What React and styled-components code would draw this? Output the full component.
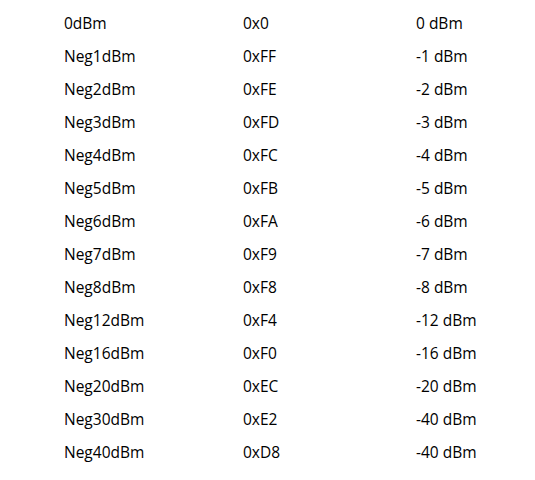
import React from "react";
import styled, { createGlobalStyle } from "styled-components";

const Global = createGlobalStyle`
  html, body { margin: 0; padding: 0; background: #fff; }
  body { font-family: "Open Sans", "Noto Sans", sans-serif; }
`;

const Table = styled.div`
  display: grid;
  grid-template-columns: 179px 173px 1fr;
  grid-auto-rows: 33px;
  padding: 6px 0 0 64px;
  width: 535px;
  box-sizing: border-box;
`;

const Cell = styled.div`
  display: flex;
  align-items: center;
  font-size: 15.5px;
  color: #000;
  white-space: nowrap;
`;

const rows = [
  ["0dBm", "0x0", "0 dBm"],
  ["Neg1dBm", "0xFF", "-1 dBm"],
  ["Neg2dBm", "0xFE", "-2 dBm"],
  ["Neg3dBm", "0xFD", "-3 dBm"],
  ["Neg4dBm", "0xFC", "-4 dBm"],
  ["Neg5dBm", "0xFB", "-5 dBm"],
  ["Neg6dBm", "0xFA", "-6 dBm"],
  ["Neg7dBm", "0xF9", "-7 dBm"],
  ["Neg8dBm", "0xF8", "-8 dBm"],
  ["Neg12dBm", "0xF4", "-12 dBm"],
  ["Neg16dBm", "0xF0", "-16 dBm"],
  ["Neg20dBm", "0xEC", "-20 dBm"],
  ["Neg30dBm", "0xE2", "-40 dBm"],
  ["Neg40dBm", "0xD8", "-40 dBm"],
];

export default function App() {
  return (
    <>
      <Global />
      <Table>
        {rows.map((r, i) =>
          r.map((c, j) => <Cell key={`${i}-${j}`}>{c}</Cell>)
        )}
      </Table>
    </>
  );
}
